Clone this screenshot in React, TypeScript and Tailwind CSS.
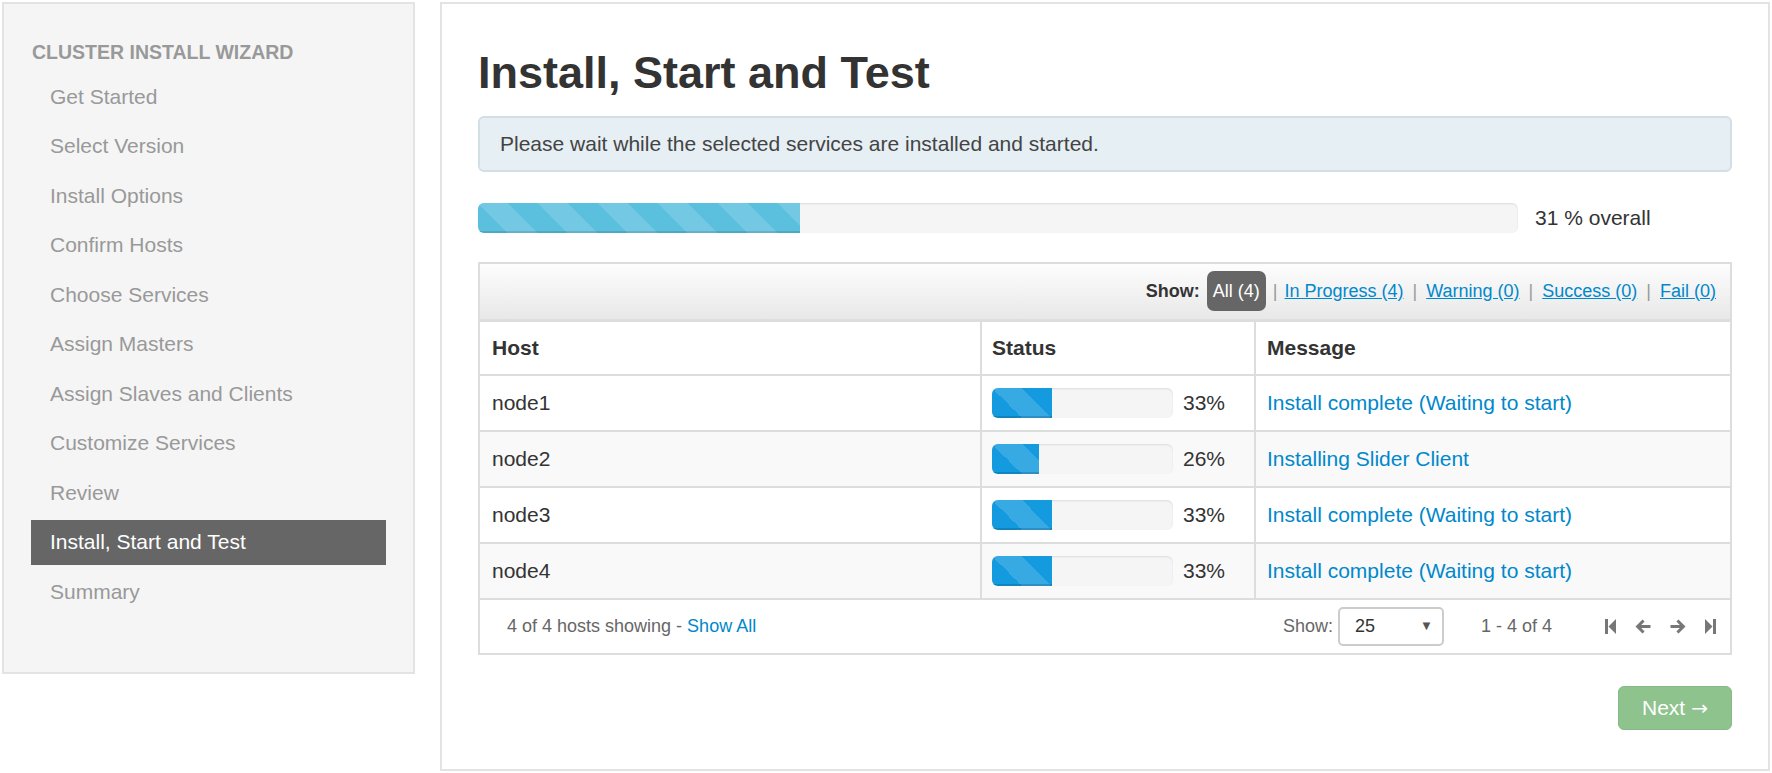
import React from 'react';

const steps = [
  'Get Started',
  'Select Version',
  'Install Options',
  'Confirm Hosts',
  'Choose Services',
  'Assign Masters',
  'Assign Slaves and Clients',
  'Customize Services',
  'Review',
  'Install, Start and Test',
  'Summary',
];

const hosts = [
  { name: 'node1', pct: 33, msg: 'Install complete (Waiting to start)' },
  { name: 'node2', pct: 26, msg: 'Installing Slider Client' },
  { name: 'node3', pct: 33, msg: 'Install complete (Waiting to start)' },
  { name: 'node4', pct: 33, msg: 'Install complete (Waiting to start)' },
];

const stripes =
  'bg-[linear-gradient(45deg,rgba(255,255,255,0.15)_25%,transparent_25%,transparent_50%,rgba(255,255,255,0.15)_50%,rgba(255,255,255,0.15)_75%,transparent_75%,transparent)] bg-size-[60px_60px]';

function FirstIcon() {
  return (
    <svg width="11" height="15" viewBox="0 0 11 15" fill="#777">
      <rect x="0" y="0" width="3" height="15" />
      <path d="M11 0 L3.5 7.5 L11 15 Z" />
    </svg>
  );
}

function LastIcon() {
  return (
    <svg width="11" height="15" viewBox="0 0 11 15" fill="#777">
      <path d="M0 0 L7.5 7.5 L0 15 Z" />
      <rect x="8" y="0" width="3" height="15" />
    </svg>
  );
}

function ArrowLeft() {
  return (
    <svg width="16" height="15" viewBox="0 0 16 15" fill="#777">
      <path d="M7.5 0.5 L0.5 7.5 L7.5 14.5 L9.6 12.4 L6.2 9.1 H15.5 V5.9 H6.2 L9.6 2.6 Z" />
    </svg>
  );
}

function ArrowRight() {
  return (
    <svg width="16" height="15" viewBox="0 0 16 15" fill="#777">
      <path d="M8.5 0.5 L15.5 7.5 L8.5 14.5 L6.4 12.4 L9.8 9.1 H0.5 V5.9 H9.8 L6.4 2.6 Z" />
    </svg>
  );
}

export default function App() {
  return (
    <div className="min-h-screen bg-white flex items-start gap-[25px] pl-[2px] pt-[2px] font-['Liberation_Sans',Arial,sans-serif]">
      {/* Wizard steps */}
      <div className="w-[413px] h-[672px] shrink-0 bg-[#f5f5f5] border-2 border-[#e3e3e3] px-[27px] pt-[35px]">
        <div className="ml-[1px] text-[19.5px] leading-[27px] font-bold text-[#999] uppercase">
          Cluster Install Wizard
        </div>
        <div className="mt-[8px] flex flex-col gap-[4.5px]">
          {steps.map((s) => {
            const active = s === 'Install, Start and Test';
            return (
              <div
                key={s}
                className={
                  active
                    ? 'h-[45px] flex items-center pl-[19px] text-[21px] bg-[#666] text-white'
                    : 'h-[45px] flex items-center pl-[19px] text-[21px] text-[#999]'
                }
              >
                {s}
              </div>
            );
          })}
        </div>
      </div>

      {/* Content */}
      <div className="w-[1330px] h-[769px] shrink-0 border-2 border-[#e3e3e3] px-[36px] pt-[46px]">
        <h1 className="text-[45px] leading-none font-bold text-[#333]">Install, Start and Test</h1>

        <div className="mt-[21px] border-2 border-[#d3dee5] bg-[#e6eff4] rounded-[6px] px-[20px] py-[12px] text-[21px] leading-[28px] text-[#444]">
          Please wait while the selected services are installed and started.
        </div>

        <div className="mt-[30px] flex items-center">
          <div className="w-[1040px] h-[30px] rounded-[6px] bg-[#f5f5f5] shadow-[inset_0_1px_2px_rgba(0,0,0,0.1)] overflow-hidden">
            <div className={`h-full w-[31%] bg-[#5bc0de] shadow-[inset_0_-2px_0_rgba(0,0,0,0.12)] ${stripes}`} />
          </div>
          <span className="ml-[17px] text-[21px] text-[#333]">31 % overall</span>
        </div>

        {/* Hosts table */}
        <div className="mt-[28px] border-2 border-[#ddd]">
          <div className="h-[55px] flex items-center justify-end pr-[14px] bg-[linear-gradient(#fdfdfd,#e8e8e8)] text-[18px]">
            <span className="font-bold text-[#333]">Show:</span>
            <span className="ml-[7px] h-[40px] px-[6px] rounded-[7px] bg-[#666] text-white flex items-center">All (4)</span>
            <span className="mx-[7px] text-[#999]">|</span>
            <a className="text-[#0088cc] underline">In Progress (4)</a>
            <span className="mx-[9px] text-[#999]">|</span>
            <a className="text-[#0088cc] underline">Warning (0)</a>
            <span className="mx-[9px] text-[#999]">|</span>
            <a className="text-[#0088cc] underline">Success (0)</a>
            <span className="mx-[9px] text-[#999]">|</span>
            <a className="text-[#0088cc] underline">Fail (0)</a>
          </div>

          <div className="grid grid-cols-[500px_274px_1fr] h-[55px] border-t-[3px] border-[#ddd] bg-white text-[21px] font-bold text-[#333]">
            <div className="flex items-center pl-[12px]">Host</div>
            <div className="flex items-center pl-[10px] border-l-2 border-[#ddd]">Status</div>
            <div className="flex items-center pl-[11px] border-l-2 border-[#ddd]">Message</div>
          </div>

          {hosts.map((h, i) => (
            <div
              key={h.name}
              className={
                i % 2 === 1
                  ? 'grid grid-cols-[500px_274px_1fr] h-[56px] border-t-2 border-[#ddd] bg-[#f9f9f9] text-[21px] text-[#333]'
                  : 'grid grid-cols-[500px_274px_1fr] h-[56px] border-t-2 border-[#ddd] bg-white text-[21px] text-[#333]'
              }
            >
              <div className="flex items-center pl-[12px]">{h.name}</div>
              <div className="flex items-center pl-[10px] border-l-2 border-[#ddd]">
                <div className="w-[181px] h-[30px] rounded-[6px] bg-[#f5f5f5] shadow-[inset_0_1px_2px_rgba(0,0,0,0.1)] overflow-hidden">
                  <div
                    className={`h-full bg-[#149bdf] shadow-[inset_0_-2px_0_rgba(0,0,0,0.15)] ${stripes}`}
                    style={{ width: `${h.pct}%` }}
                  />
                </div>
                <span className="ml-[10px]">{h.pct}%</span>
              </div>
              <div className="flex items-center pl-[11px] border-l-2 border-[#ddd]">
                <a className="text-[#0088cc]">{h.msg}</a>
              </div>
            </div>
          ))}

          <div className="h-[55px] border-t-2 border-[#ddd] bg-white flex items-center pl-[27px] pr-[14px] text-[18px] text-[#666]">
            <span>
              4 of 4 hosts showing - <a className="text-[#0088cc]">Show All</a>
            </span>
            <div className="ml-auto flex items-center">
              <span>Show:</span>
              <div className="ml-[5px] w-[106px] h-[39px] border-2 border-[#ccc] rounded-[5px] bg-white flex items-center pl-[15px] pr-[9px] text-[#333]">
                <span>25</span>
                <span className="ml-auto text-[13px] text-[#555]">▼</span>
              </div>
              <span className="ml-[37px]">1 - 4 of 4</span>
              <div className="ml-[53px] flex items-center gap-[19px]">
                <FirstIcon />
                <ArrowLeft />
                <ArrowRight />
                <LastIcon />
              </div>
            </div>
          </div>
        </div>

        <div className="mt-[31px] flex justify-end">
          <button className="w-[114px] h-[44px] rounded-[6px] bg-[#8ec38e] border border-[#86ba86] text-white text-[21px] flex items-center justify-center gap-[6px]">
            <span>Next</span>
            <span className="font-['DejaVu_Sans',sans-serif] text-[20px]">→</span>
          </button>
        </div>
      </div>
    </div>
  );
}
